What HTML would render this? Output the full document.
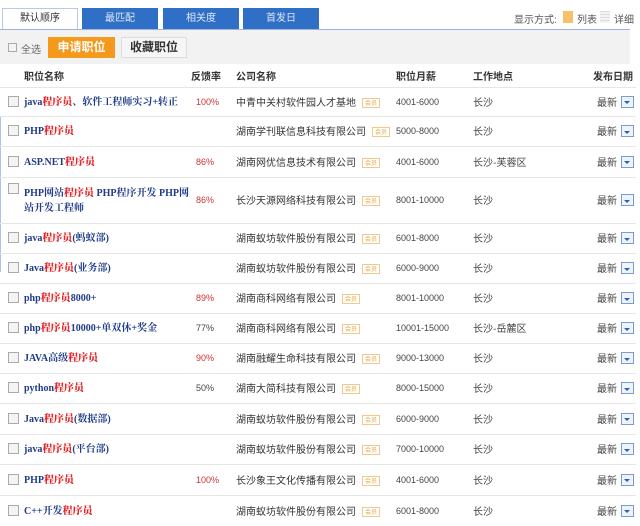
<!DOCTYPE html>
<html><head><meta charset="utf-8"><style>
*{margin:0;padding:0;box-sizing:border-box}
body{width:640px;height:519px;overflow:hidden;background:#fff;font-family:"Liberation Sans","Noto Sans CJK SC",sans-serif;font-size:10px;color:#333;position:relative}
.a{position:absolute;white-space:nowrap}
.tab{position:absolute;top:8px;height:21px;width:76px;background:#2f6fc6;color:#dfe9f7;text-align:center;line-height:21px;font-size:10px}
.row{position:absolute;left:0;width:636px;border-bottom:1px solid #e6e6e6}
.row>div{position:absolute;top:0;bottom:0;display:flex;align-items:center;white-space:nowrap}
.row>div>span{display:block;line-height:13px;position:relative}
.co>span,.lo>span,.dt>span{top:-1px}
.cb{left:8px}
.cb:before{content:"";width:9px;height:9px;border:1px solid #aaa;background:#f4f4f4;margin-top:-2px}
.t{left:24px;font-family:"Liberation Serif","Noto Serif CJK SC",serif;font-weight:bold;color:#203c88;font-size:10px}
.t b{color:#e3262a}
.fb{left:196px;font-size:9px;color:#c33}
.fb.d{color:#444}
.co{left:236px;font-size:10px;color:#333;font-family:"Noto Sans CJK SC",sans-serif}
.co i{display:inline-block;font-style:normal;font-size:6px;color:#e8a94c;border:1px solid #f2c98a;padding:0 2px;margin-left:6px;line-height:8px;vertical-align:1px}
.sa{left:396px;font-size:9px;color:#444}
.lo{left:473px;font-size:10px;color:#444;font-family:"Noto Sans CJK SC",sans-serif}
.dt{left:597px;font-size:10px;color:#444;font-family:"Noto Sans CJK SC",sans-serif}
.dd{left:621px}
.dd:before{content:"";width:11px;height:10px;border:1px solid #7a9cd0;background:#eef3fb;margin-top:-1px}
.dd:after{content:"";position:absolute;left:3px;top:50%;margin-top:-1px;border-left:3px solid transparent;border-right:3px solid transparent;border-top:3px solid #2f5fb0}
.t2>span{white-space:normal;width:170px;line-height:15px!important}
</style></head><body>
<div class="a" style="left:2px;top:8px;width:76px;height:22px;border:1px solid #b9c9e0;border-bottom:none;background:#fff;text-align:center;line-height:20px;color:#333">默认顺序</div>
<div class="tab" style="left:82px">最匹配</div>
<div class="tab" style="left:163px">相关度</div>
<div class="tab" style="left:243px">首发日</div>
<div class="a" style="left:514px;top:11px;color:#555;font-size:10px">显示方式:</div>
<div class="a" style="left:563px;top:11px;width:10px;height:12px;background:#f7c06a"></div>
<div class="a" style="left:577px;top:11px;color:#555">列表</div>
<div class="a" style="left:600px;top:11px;width:10px;height:12px;background:repeating-linear-gradient(#ddd 0 1px,#f3f3f3 1px 3px)"></div>
<div class="a" style="left:614px;top:11px;color:#555">详细</div>
<div class="a" style="left:0;top:29px;width:630px;height:1px;background:#9fb3dc"></div>
<div class="a" style="left:0;top:30px;width:630px;height:34px;background:#f2f2f2"></div>
<div class="a" style="left:8px;top:43px;width:9px;height:9px;border:1px solid #aaa;background:#f4f4f4"></div>
<div class="a" style="left:21px;top:41px;color:#666">全选</div>
<div class="a" style="left:48px;top:37px;width:67px;height:21px;background:#f39a1d;color:#fff;font-weight:bold;font-size:12px;text-align:center;line-height:21px">申请职位</div>
<div class="a" style="left:121px;top:37px;width:66px;height:21px;background:#f6f6f6;border:1px solid #ddd;color:#333;font-weight:bold;font-size:12px;text-align:center;line-height:19px">收藏职位</div>
<div class="row" style="top:64px;height:24px;font-weight:bold;font-size:10px;color:#333">
<span class="a" style="left:24px;top:4px">职位名称</span><span class="a" style="left:191px;top:4px">反馈率</span><span class="a" style="left:236px;top:4px">公司名称</span><span class="a" style="left:396px;top:4px">职位月薪</span><span class="a" style="left:473px;top:4px">工作地点</span><span class="a" style="left:593px;top:4px">发布日期</span></div>
<div class="a" style="left:0;top:117px;width:1px;height:155px;background:#a9c4ea"></div>

<div class="row" style="top:88px;height:29px"><div class="cb"></div><div class="t"><span>java<b>程序员</b>、软件工程师实习+转正</span></div><div class="fb"><span>100%</span></div><div class="co"><span>中青中关村软件园人才基地<i>会员</i></span></div><div class="sa"><span>4001-6000</span></div><div class="lo"><span>长沙</span></div><div class="dt"><span>最新</span></div><div class="dd"></div></div>
<div class="row" style="top:117px;height:30px"><div class="cb"></div><div class="t"><span>PHP<b>程序员</b></span></div><div class="co"><span>湖南学刊联信息科技有限公司<i>会员</i></span></div><div class="sa"><span>5000-8000</span></div><div class="lo"><span>长沙</span></div><div class="dt"><span>最新</span></div><div class="dd"></div></div>
<div class="row" style="top:147px;height:31px"><div class="cb"></div><div class="t"><span>ASP.NET<b>程序员</b></span></div><div class="fb"><span>86%</span></div><div class="co"><span>湖南网优信息技术有限公司<i>会员</i></span></div><div class="sa"><span>4001-6000</span></div><div class="lo"><span>长沙-芙蓉区</span></div><div class="dt"><span>最新</span></div><div class="dd"></div></div>
<div class="row" style="top:178px;height:46px"><div class="cb" style="bottom:auto;top:7px"></div><div class="t t2"><span>PHP网站<b>程序员</b> PHP程序开发 PHP网站开发工程师</span></div><div class="fb"><span>86%</span></div><div class="co"><span>长沙天源网络科技有限公司<i>会员</i></span></div><div class="sa"><span>8001-10000</span></div><div class="lo"><span>长沙</span></div><div class="dt"><span>最新</span></div><div class="dd"></div></div>
<div class="row" style="top:224px;height:30px"><div class="cb"></div><div class="t"><span>java<b>程序员</b>(蚂蚁部)</span></div><div class="co"><span>湖南蚁坊软件股份有限公司<i>会员</i></span></div><div class="sa"><span>6001-8000</span></div><div class="lo"><span>长沙</span></div><div class="dt"><span>最新</span></div><div class="dd"></div></div>
<div class="row" style="top:254px;height:30px"><div class="cb"></div><div class="t"><span>Java<b>程序员</b>(业务部)</span></div><div class="co"><span>湖南蚁坊软件股份有限公司<i>会员</i></span></div><div class="sa"><span>6000-9000</span></div><div class="lo"><span>长沙</span></div><div class="dt"><span>最新</span></div><div class="dd"></div></div>
<div class="row" style="top:284px;height:30px"><div class="cb"></div><div class="t"><span>php<b>程序员</b>8000+</span></div><div class="fb"><span>89%</span></div><div class="co"><span>湖南商科网络有限公司<i>会员</i></span></div><div class="sa"><span>8001-10000</span></div><div class="lo"><span>长沙</span></div><div class="dt"><span>最新</span></div><div class="dd"></div></div>
<div class="row" style="top:314px;height:30px"><div class="cb"></div><div class="t"><span>php<b>程序员</b>10000+单双休+奖金</span></div><div class="fb d"><span>77%</span></div><div class="co"><span>湖南商科网络有限公司<i>会员</i></span></div><div class="sa"><span>10001-15000</span></div><div class="lo"><span>长沙-岳麓区</span></div><div class="dt"><span>最新</span></div><div class="dd"></div></div>
<div class="row" style="top:344px;height:30px"><div class="cb"></div><div class="t"><span>JAVA高级<b>程序员</b></span></div><div class="fb"><span>90%</span></div><div class="co"><span>湖南融耀生命科技有限公司<i>会员</i></span></div><div class="sa"><span>9000-13000</span></div><div class="lo"><span>长沙</span></div><div class="dt"><span>最新</span></div><div class="dd"></div></div>
<div class="row" style="top:374px;height:30px"><div class="cb"></div><div class="t"><span>python<b>程序员</b></span></div><div class="fb d"><span>50%</span></div><div class="co"><span>湖南大简科技有限公司<i>会员</i></span></div><div class="sa"><span>8000-15000</span></div><div class="lo"><span>长沙</span></div><div class="dt"><span>最新</span></div><div class="dd"></div></div>
<div class="row" style="top:404px;height:31px"><div class="cb"></div><div class="t"><span>Java<b>程序员</b>(数据部)</span></div><div class="co"><span>湖南蚁坊软件股份有限公司<i>会员</i></span></div><div class="sa"><span>6000-9000</span></div><div class="lo"><span>长沙</span></div><div class="dt"><span>最新</span></div><div class="dd"></div></div>
<div class="row" style="top:435px;height:30px"><div class="cb"></div><div class="t"><span>java<b>程序员</b>(平台部)</span></div><div class="co"><span>湖南蚁坊软件股份有限公司<i>会员</i></span></div><div class="sa"><span>7000-10000</span></div><div class="lo"><span>长沙</span></div><div class="dt"><span>最新</span></div><div class="dd"></div></div>
<div class="row" style="top:465px;height:31px"><div class="cb"></div><div class="t"><span>PHP<b>程序员</b></span></div><div class="fb"><span>100%</span></div><div class="co"><span>长沙象王文化传播有限公司<i>会员</i></span></div><div class="sa"><span>4001-6000</span></div><div class="lo"><span>长沙</span></div><div class="dt"><span>最新</span></div><div class="dd"></div></div>
<div class="row" style="top:496px;height:30px;border:none"><div class="cb"></div><div class="t"><span>C++开发<b>程序员</b></span></div><div class="co"><span>湖南蚁坊软件股份有限公司<i>会员</i></span></div><div class="sa"><span>6001-8000</span></div><div class="lo"><span>长沙</span></div><div class="dt"><span>最新</span></div><div class="dd"></div></div>
</body></html>
